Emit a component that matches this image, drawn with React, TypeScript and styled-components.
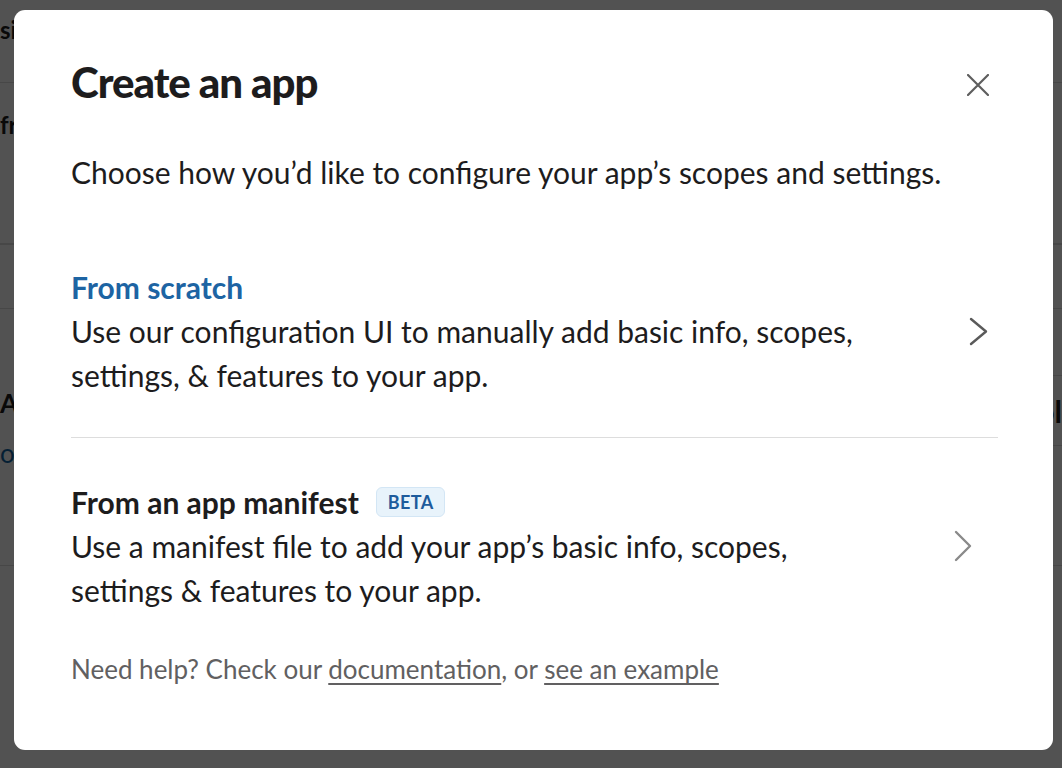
import React from "react";
import styled, { createGlobalStyle } from "styled-components";

const Global = createGlobalStyle`
  html, body { margin: 0; padding: 0; }
  body { font-family: Lato, "Noto Sans", sans-serif; background: #fff; width: 1062px; height: 768px; overflow: hidden; }
  * { box-sizing: border-box; }
`;

/* ---------- background page (behind the overlay) ---------- */
const Page = styled.div`
  display: flex;
  flex-direction: column;
  width: 1062px;
  height: 768px;
  color: #1d1c1d;
`;

const PageRow = styled.div<{ $h: number; $border?: number }>`
  height: ${(p) => p.$h}px;
  border-bottom: ${(p) => p.$border ?? 1}px solid #dddddd;
  display: flex;
  justify-content: space-between;
`;

const PageText = styled.div<{ $top: number; $blue?: boolean; $bold?: boolean; $size?: number }>`
  padding-top: ${(p) => p.$top}px;
  font-size: ${(p) => p.$size ?? 26}px;
  font-weight: ${(p) => (p.$bold ? 700 : 400)};
  color: ${(p) => (p.$blue ? "#1264a3" : "#1d1c1d")};
  white-space: nowrap;
  line-height: 32px;
`;

const LeftCol = styled.div`
  display: flex;
  flex-direction: column;
`;

const RightCard = styled.div`
  width: 400px;
  display: flex;
  flex-direction: column;
`;

const RightCardRow = styled.div<{ $h: number; $top?: boolean }>`
  height: ${(p) => p.$h}px;
  border-top: ${(p) => (p.$top ? "1px solid #dddddd" : "none")};
  display: flex;
  justify-content: flex-end;
  align-items: center;
  font-size: 30px;
  font-weight: 700;
`;

/* ---------- overlay + modal ---------- */
const Overlay = styled.div`
  position: fixed;
  inset: 0;
  background: rgba(0, 0, 0, 0.68);
  padding: 10px 9px 18px 14px;
  display: flex;
`;

const Modal = styled.div`
  flex: 1;
  background: #ffffff;
  border-radius: 11px;
  padding: 46px 55px 0 57px;
  display: flex;
  flex-direction: column;
  color: #1d1c1d;
`;

const Header = styled.div`
  height: 52px;
  display: flex;
  align-items: center;
  justify-content: space-between;
`;

const Title = styled.h1`
  margin: 0;
  font-size: 42px;
  line-height: 52px;
  font-weight: 900;
  letter-spacing: -1px;
`;

const CloseButton = styled.button`
  width: 30px;
  height: 30px;
  margin-right: 5px;
  margin-top: 6px;
  border: none;
  background: none;
  padding: 0;
  display: flex;
  align-items: center;
  justify-content: center;
  color: #5e5e5e;
`;

const Description = styled.p`
  margin: 42px 0 0;
  font-size: 30px;
  line-height: 44px;
`;

const Options = styled.div`
  margin-top: 28px;
  display: flex;
  flex-direction: column;
`;

const Option = styled.div`
  padding: 43px 0 40px;
  display: flex;
  align-items: center;
  justify-content: space-between;
  border-bottom: 1px solid #dddddd;
  & + & {
    padding-top: 42px;
  }
  &:last-child {
    border-bottom: none;
  }
`;

const OptionText = styled.div`
  display: flex;
  flex-direction: column;
  font-size: 30px;
  line-height: 44px;
`;

const OptionTitle = styled.div<{ $link?: boolean }>`
  display: flex;
  align-items: center;
  gap: 17px;
  font-weight: 700;
  color: ${(p) => (p.$link ? "#1d64a3" : "#1d1c1d")};
`;

const Badge = styled.span`
  display: inline-flex;
  align-items: center;
  height: 30px;
  padding: 0 10px 0 11px;
  border-radius: 6px;
  border: 1px solid #d3e6f5;
  background: #e8f3fb;
  color: #1d5b9c;
  font-size: 18px;
  font-weight: 700;
  letter-spacing: 0.4px;
  line-height: 1;
`;

const Chevron = styled.div<{ $right: number; $color: string }>`
  margin-right: ${(p) => p.$right}px;
  color: ${(p) => p.$color};
  display: flex;
`;

const Footer = styled.p`
  margin: -3px 0 0;
  font-size: 26px;
  line-height: 40px;
  color: #616061;
`;

const FooterLink = styled.a`
  color: #616061;
  text-decoration: underline;
  text-decoration-thickness: 1.5px;
  text-underline-offset: 4px;
`;

const CloseIcon = () => (
  <svg width="22" height="22" viewBox="0 0 22 22" fill="none">
    <path d="M1 1 L21 21 M21 1 L1 21" stroke="currentColor" strokeWidth="2.2" strokeLinecap="round" />
  </svg>
);

const ChevronIcon = ({ w, h }: { w: number; h: number }) => (
  <svg width={w} height={h} viewBox={`0 0 ${w} ${h}`} fill="none">
    <path
      d={`M2 2 L${w - 2} ${h / 2} L2 ${h - 2}`}
      stroke="currentColor"
      strokeWidth="2.4"
      strokeLinecap="round"
      strokeLinejoin="round"
    />
  </svg>
);

export default function App() {
  return (
    <>
      <Global />
      <Page>
        <PageRow $h={83}>
          <PageText $top={14} $bold $size={24}>
            sign
          </PageText>
        </PageRow>
        <PageRow $h={162} $border={2}>
          <PageText $top={26} $bold $size={24}>
            fr
          </PageText>
        </PageRow>
        <PageRow $h={64}>
          <div />
        </PageRow>
        <PageRow $h={257}>
          <LeftCol>
            <PageText $top={78} $bold $size={26}>
              Ap
            </PageText>
            <PageText $top={18} $blue $size={26}>
              oc
            </PageText>
          </LeftCol>
          <RightCard>
            <RightCardRow $h={66} />
            <RightCardRow $h={70} $top>
              ol
            </RightCardRow>
            <RightCardRow $h={100} $top />
          </RightCard>
        </PageRow>
      </Page>

      <Overlay>
        <Modal>
          <Header>
            <Title>Create an app</Title>
            <CloseButton aria-label="Close">
              <CloseIcon />
            </CloseButton>
          </Header>
          <Description>Choose how you’d like to configure your app’s scopes and settings.</Description>
          <Options>
            <Option>
              <OptionText>
                <OptionTitle $link>From scratch</OptionTitle>
                <span>Use our configuration UI to manually add basic info, scopes,</span>
                <span>settings, &amp; features to your app.</span>
              </OptionText>
              <Chevron $right={10} $color="#5a5a5a">
                <ChevronIcon w={19} h={29} />
              </Chevron>
            </Option>
            <Option>
              <OptionText>
                <OptionTitle>
                  From an app manifest <Badge>BETA</Badge>
                </OptionTitle>
                <span>Use a manifest file to add your app’s basic info, scopes,</span>
                <span>settings &amp; features to your app.</span>
              </OptionText>
              <Chevron $right={26} $color="#8a8a8a">
                <ChevronIcon w={18} h={32} />
              </Chevron>
            </Option>
          </Options>
          <Footer>
            Need help? Check our <FooterLink href="#">documentation</FooterLink>, or{" "}
            <FooterLink href="#">see an example</FooterLink>
          </Footer>
        </Modal>
      </Overlay>
    </>
  );
}
